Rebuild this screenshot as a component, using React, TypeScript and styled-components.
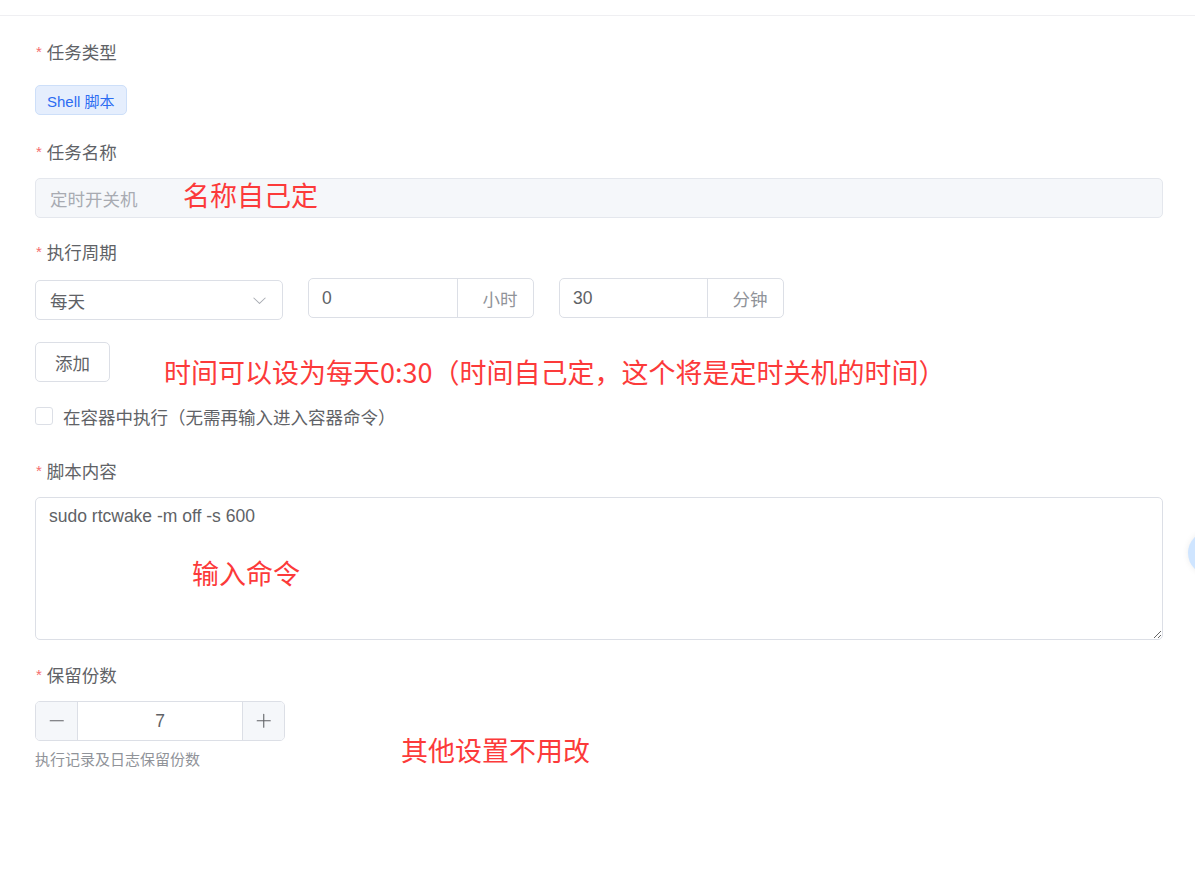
import React from "react";
import styled, { createGlobalStyle } from "styled-components";

const GlobalStyle = createGlobalStyle`
  html, body { margin: 0; padding: 0; background: #ffffff; }
  body {
    font-family: "Liberation Sans", "Noto Sans CJK SC", sans-serif;
    color: #606266;
  }
  * { box-sizing: border-box; }
`;

const Page = styled.div`
  position: relative;
  width: 1195px;
  height: 887px;
  overflow: hidden;
  background: #fff;
`;

const TopBar = styled.div`
  height: 16px;
  border-bottom: 1px solid #efeff2;
`;

const Form = styled.div`
  display: flex;
  flex-direction: column;
  padding: 27px 32px 0 35px;
`;

const FormItem = styled.div<{ $mb?: number }>`
  display: flex;
  flex-direction: column;
  margin-bottom: ${(p) => (p.$mb ?? 25)}px;
`;

const Label = styled.div`
  height: 21px;
  line-height: 21px;
  font-size: 17.5px;
  color: #606266;
  margin-bottom: 14px;
  display: flex;
  align-items: center;
`;

const Star = styled.span`
  color: #f56c6c;
  font-size: 15px;
  margin-right: 5px;
  margin-left: 1px;
  position: relative;
  top: -2px;
`;

const TagRow = styled.div`
  height: 40px;
  display: flex;
  align-items: flex-start;
  padding-top: 7px;
`;

const Tag = styled.span`
  display: inline-flex;
  align-items: center;
  height: 30px;
  padding: 0 11px;
  font-size: 15px;
  color: #2c6cf2;
  background: #e5eefd;
  border: 1px solid #cddff9;
  border-radius: 5px;
`;

const TextBox = styled.div<{ $disabled?: boolean; $width?: number }>`
  display: flex;
  align-items: center;
  height: 40px;
  width: ${(p) => (p.$width ? `${p.$width}px` : "100%")};
  padding: 0 14px;
  font-size: 17.5px;
  border-radius: 5px;
  border: 1px solid ${(p) => (p.$disabled ? "#e4e7ed" : "#dcdfe6")};
  background: ${(p) => (p.$disabled ? "#f5f7fa" : "#fff")};
  color: ${(p) => (p.$disabled ? "#a8abb2" : "#606266")};
`;

const PeriodRow = styled.div`
  display: flex;
  align-items: flex-start;
  gap: 25px;
`;

const SelectBox = styled(TextBox)`
  margin-top: 2px;
  justify-content: space-between;
  padding-right: 14px;
`;

const ChevronIcon = styled.svg`
  width: 17px;
  height: 17px;
  fill: #a8abb2;
`;

const Group = styled.div<{ $width: number; $append: number }>`
  display: grid;
  grid-template-columns: 1fr ${(p) => p.$append}px;
  width: ${(p) => p.$width}px;
  height: 40px;
  border: 1px solid #dcdfe6;
  border-radius: 5px;
  font-size: 17.5px;
`;

const GroupValue = styled.div`
  display: flex;
  align-items: center;
  padding: 0 13px;
  color: #606266;
`;

const GroupAppend = styled.div`
  display: flex;
  align-items: center;
  justify-content: center;
  border-left: 1px solid #dcdfe6;
  color: #909399;
  padding-left: 9px;
`;

const Button = styled.button`
  margin-top: 22px;
  align-self: flex-start;
  width: 75px;
  height: 40px;
  border: 1px solid #dcdfe6;
  border-radius: 5px;
  background: #fff;
  color: #606266;
  font-family: inherit;
  font-size: 17.5px;
  padding: 0;
`;

const CheckRow = styled.label`
  display: flex;
  align-items: center;
  height: 24px;
  margin-top: 22px;
  margin-bottom: 34px;
  font-size: 17.5px;
  color: #606266;
  gap: 10px;
`;

const CheckBox = styled.span`
  width: 18px;
  height: 18px;
  border: 1px solid #dcdfe6;
  border-radius: 3px;
  background: #fff;
`;

const TextArea = styled.textarea`
  width: 100%;
  height: 143px;
  padding: 5px 13px;
  border: 1px solid #dcdfe6;
  border-radius: 5px;
  font-family: "Liberation Sans", "Noto Sans CJK SC", sans-serif;
  font-size: 17.5px;
  line-height: 26px;
  color: #606266;
  resize: vertical;
  outline: none;
  display: block;
`;

const NumberBox = styled.div`
  display: grid;
  grid-template-columns: 42px 1fr 42px;
  width: 250px;
  height: 40px;
  border: 1px solid #dcdfe6;
  border-radius: 5px;
  overflow: hidden;
`;

const StepButton = styled.div<{ $side: "left" | "right" }>`
  display: flex;
  align-items: center;
  justify-content: center;
  background: #f5f7fa;
  ${(p) => (p.$side === "left" ? "border-right" : "border-left")}: 1px solid #dcdfe6;
  svg { width: 17.5px; height: 17.5px; fill: #606266; }
`;

const NumberValue = styled.div`
  display: flex;
  align-items: center;
  justify-content: center;
  font-size: 17.5px;
  color: #606266;
`;

const Help = styled.div`
  margin-top: 9px;
  height: 20px;
  line-height: 20px;
  font-size: 15px;
  color: #909399;
`;

const Note = styled.div<{ $x: number; $y: number }>`
  position: absolute;
  left: ${(p) => p.$x}px;
  top: ${(p) => p.$y}px;
  font-family: "Noto Sans CJK SC", "Liberation Sans", sans-serif;
  font-size: 27px;
  line-height: 27px;
  color: #fc3a3a;
  white-space: nowrap;
`;

const FloatBall = styled.div`
  position: absolute;
  left: 1188px;
  top: 531px;
  width: 44px;
  height: 44px;
  border-radius: 50%;
  background: #cfe5ff;
  box-shadow: 0 0 6px rgba(0, 0, 0, 0.08);
`;

const Required: React.FC<{ children: React.ReactNode }> = ({ children }) => (
  <Label>
    <Star>*</Star>
    {children}
  </Label>
);

export default function App() {
  return (
    <Page>
      <GlobalStyle />
      <TopBar />
      <Form>
        <FormItem>
          <Required>任务类型</Required>
          <TagRow>
            <Tag>Shell 脚本</Tag>
          </TagRow>
        </FormItem>

        <FormItem>
          <Required>任务名称</Required>
          <TextBox $disabled>定时开关机</TextBox>
        </FormItem>

        <FormItem $mb={0}>
          <Required>执行周期</Required>
          <PeriodRow>
            <SelectBox $width={248}>
              <span>每天</span>
              <ChevronIcon viewBox="0 0 1024 1024">
                <path d="M831.872 340.864 512 652.672 192.128 340.864a30.592 30.592 0 0 0-42.752 0 29.12 29.12 0 0 0 0 41.6L489.664 714.24a32 32 0 0 0 44.672 0l340.288-331.712a29.12 29.12 0 0 0 0-41.728 30.592 30.592 0 0 0-42.752 0z" />
              </ChevronIcon>
            </SelectBox>
            <Group $width={226} $append={76}>
              <GroupValue>0</GroupValue>
              <GroupAppend>小时</GroupAppend>
            </Group>
            <Group $width={225} $append={76}>
              <GroupValue>30</GroupValue>
              <GroupAppend>分钟</GroupAppend>
            </Group>
          </PeriodRow>
          <Button>添加</Button>
        </FormItem>

        <CheckRow>
          <CheckBox />
          在容器中执行（无需再输入进入容器命令）
        </CheckRow>

        <FormItem $mb={26}>
          <Required>脚本内容</Required>
          <TextArea defaultValue="sudo rtcwake -m off -s 600" />
        </FormItem>

        <FormItem $mb={0}>
          <Required>保留份数</Required>
          <NumberBox>
            <StepButton $side="left">
              <svg viewBox="0 0 1024 1024">
                <path d="M128 544h768a32 32 0 1 0 0-64H128a32 32 0 0 0 0 64z" />
              </svg>
            </StepButton>
            <NumberValue>7</NumberValue>
            <StepButton $side="right">
              <svg viewBox="0 0 1024 1024">
                <path d="M480 480V128a32 32 0 0 1 64 0v352h352a32 32 0 1 1 0 64H544v352a32 32 0 1 1-64 0V544H128a32 32 0 0 1 0-64h352z" />
              </svg>
            </StepButton>
          </NumberBox>
          <Help>执行记录及日志保留份数</Help>
        </FormItem>
      </Form>

      <Note $x={183} $y={181}>名称自己定</Note>
      <Note $x={164} $y={358}>时间可以设为每天0:30（时间自己定，这个将是定时关机的时间）</Note>
      <Note $x={192} $y={559}>输入命令</Note>
      <Note $x={401} $y={736}>其他设置不用改</Note>
      <FloatBall />
    </Page>
  );
}
